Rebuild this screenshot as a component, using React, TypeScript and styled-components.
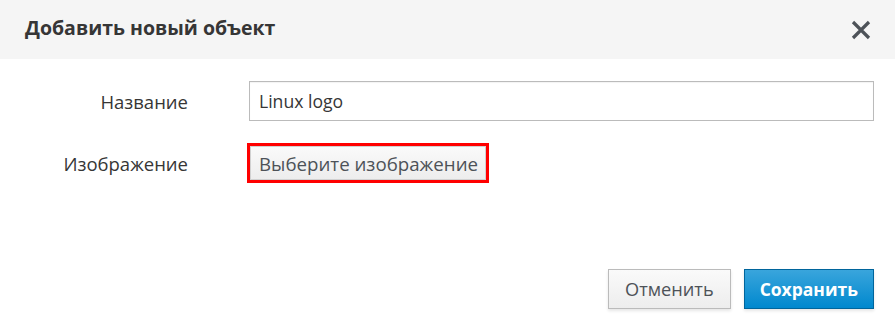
import React, { FC, useState } from 'react';
import styled, { createGlobalStyle } from 'styled-components';

const GlobalStyle = createGlobalStyle`
  html, body {
    margin: 0;
    padding: 0;
    background: #ffffff;
    font-family: 'Open Sans', 'Liberation Sans', sans-serif;
  }
`;

const Modal = styled.div`
  width: 895px;
  height: 334px;
  display: flex;
  flex-direction: column;
  background: #ffffff;
  color: #363636;
`;

const Header = styled.div`
  height: 59px;
  display: flex;
  align-items: center;
  justify-content: space-between;
  padding: 0 24px 0 25px;
  background: #f5f5f5;
  box-sizing: border-box;
`;

const Title = styled.h4`
  margin: 0 0 4px;
  font-size: 19.5px;
  font-weight: 700;
  color: #363636;
`;

const CloseButton = styled.button`
  display: flex;
  padding: 0;
  border: 0;
  background: none;
  cursor: pointer;
`;

const Body = styled.div`
  flex: 1;
  display: flex;
  flex-direction: column;
  gap: 22px;
  padding: 22px 21px 0 0;
`;

const Row = styled.div`
  display: grid;
  grid-template-columns: 188px 1fr;
  column-gap: 61px;
  align-items: center;
`;

const Label = styled.label`
  text-align: right;
  font-size: 18.5px;
  color: #363636;
`;

const TextInput = styled.input`
  height: 40px;
  box-sizing: border-box;
  padding: 0 9px;
  border: 1px solid #bbbbbb;
  box-shadow: inset 0 1px 1px rgba(3, 3, 3, 0.05);
  font-family: inherit;
  font-size: 17.6px;
  color: #363636;
  outline: none;
`;

const Highlight = styled.div`
  justify-self: start;
  margin-left: -2px;
  border: 3px solid #ff0000;
  display: flex;
`;

const Button = styled.button<{ $primary?: boolean }>`
  height: 40px;
  box-sizing: border-box;
  padding: 0 ${(p) => (p.$primary ? '15px' : '16px')};
  font-family: inherit;
  font-size: ${(p) => (p.$primary ? '17.5px' : '18.2px')};
  font-weight: ${(p) => (p.$primary ? 700 : 400)};
  color: ${(p) => (p.$primary ? '#ffffff' : '#4d5258')};
  border: 1px solid ${(p) => (p.$primary ? '#00659c' : '#bbbbbb')};
  background: ${(p) =>
    p.$primary
      ? 'linear-gradient(to bottom, #39a5dc 0%, #0088ce 100%)'
      : 'linear-gradient(to bottom, #fafafa 0%, #ededed 100%)'};
  box-shadow: 0 2px 3px rgba(3, 3, 3, 0.1);
  cursor: pointer;
`;

const PickButton = styled(Button)`
  height: 34px;
  padding: 0 7px 0 8px;
  font-size: 18.7px;
  box-shadow: none;
  border-color: #d1d1d1;
`;

const Footer = styled.div`
  display: flex;
  justify-content: flex-end;
  gap: 13px;
  padding: 0 21px 25px 0;
`;

const App: FC = () => {
  const [name, setName] = useState('Linux logo');

  return (
    <>
      <GlobalStyle />
      <Modal>
        <Header>
          <Title>Добавить новый объект</Title>
          <CloseButton aria-label="Закрыть">
            <svg width="20" height="20" viewBox="0 0 20 20">
              <path d="M2 2 L18 18 M18 2 L2 18" stroke="#4d5258" strokeWidth="3.2" />
            </svg>
          </CloseButton>
        </Header>
        <Body>
          <Row>
            <Label>Название</Label>
            <TextInput value={name} onChange={(e) => setName(e.target.value)} />
          </Row>
          <Row>
            <Label>Изображение</Label>
            <Highlight>
              <PickButton>Выберите изображение</PickButton>
            </Highlight>
          </Row>
        </Body>
        <Footer>
          <Button>Отменить</Button>
          <Button $primary>Сохранить</Button>
        </Footer>
      </Modal>
    </>
  );
};

export default App;
